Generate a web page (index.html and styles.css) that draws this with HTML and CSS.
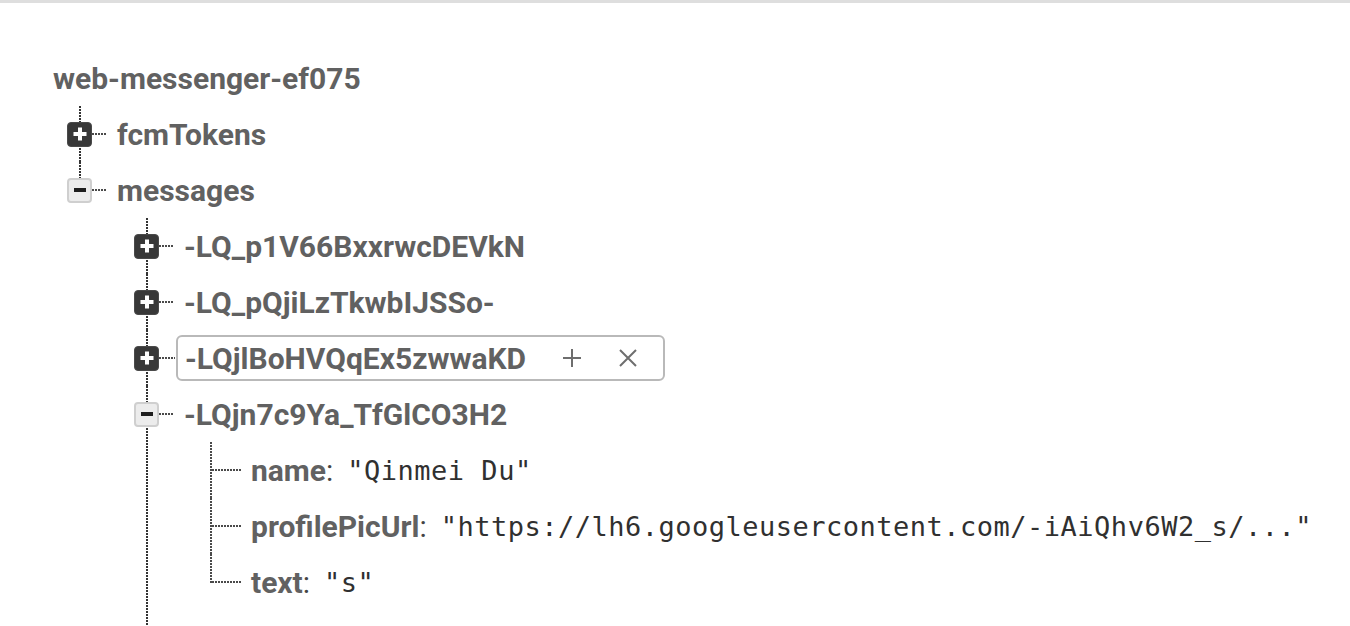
FILE: index.html
```html
<!DOCTYPE html>
<html lang="en">
<head>
<meta charset="utf-8">
<title>web-messenger-ef075</title>
<link rel="stylesheet" href="styles.css">
</head>
<body>
<div class="page">
  <div class="tree">
    <div class="root-label">web-messenger-ef075</div>
    <ul class="branch lvl1">
      <li class="node">
        <div class="row"><span class="toggle plus"></span><span class="conn"></span><span class="key">fcmTokens</span></div>
      </li>
      <li class="node">
        <div class="row"><span class="toggle minus"></span><span class="conn"></span><span class="key">messages</span></div>
        <ul class="branch lvl2 open-end">
          <li class="node">
            <div class="row"><span class="toggle plus"></span><span class="conn"></span><span class="key">-LQ_p1V66BxxrwcDEVkN</span></div>
          </li>
          <li class="node">
            <div class="row"><span class="toggle plus"></span><span class="conn"></span><span class="key">-LQ_pQjiLzTkwbIJSSo-</span></div>
          </li>
          <li class="node">
            <div class="row"><span class="toggle plus"></span><span class="conn conn-short"></span>
              <span class="key selected">-LQjlBoHVQqEx5zwwaKD
                <span class="actions">
                  <svg class="act" viewBox="0 0 20 20"><path d="M10 1v18M1 10h18"/></svg>
                  <svg class="act" viewBox="0 0 20 20"><path d="M2 2l16 16M18 2L2 18"/></svg>
                </span>
              </span>
            </div>
          </li>
          <li class="node">
            <div class="row"><span class="toggle minus"></span><span class="conn"></span><span class="key">-LQjn7c9Ya_TfGlCO3H2</span></div>
            <ul class="branch lvl3">
              <li class="node leaf">
                <div class="row"><span class="conn conn-leaf"></span><span class="key">name<span class="colon">:</span></span><span class="val">"Qinmei Du"</span></div>
              </li>
              <li class="node leaf">
                <div class="row"><span class="conn conn-leaf"></span><span class="key">profilePicUrl<span class="colon">:</span></span><span class="val">"https://lh6.googleusercontent.com/-iAiQhv6W2_s/..."</span></div>
              </li>
              <li class="node leaf">
                <div class="row"><span class="conn conn-leaf"></span><span class="key">text<span class="colon">:</span></span><span class="val">"s"</span></div>
              </li>
            </ul>
          </li>
        </ul>
      </li>
    </ul>
  </div>
</div>
</body>
</html>
```

FILE: styles.css
```css
html, body {
  margin: 0;
  padding: 0;
  background: #ffffff;
}

body {
  font-family: Roboto, "Liberation Sans", sans-serif;
  color: #616161;
  overflow: hidden;
}

.page {
  border-top: 3px solid #dedede;
  padding-top: 47px;
}

.root-label {
  height: 56px;
  display: flex;
  align-items: center;
  padding-left: 53px;
  font-size: 30px;
  font-weight: 700;
}

.branch {
  list-style: none;
  margin: 0;
  padding: 0;
}

.lvl1 {
  margin-left: 79px;
}

.lvl2 {
  margin-left: 67px;
}

.lvl3 {
  margin-left: 64px;
}

.node {
  position: relative;
}

.node::before {
  content: "";
  position: absolute;
  left: 0;
  top: 0;
  bottom: 0;
  width: 2px;
  background: repeating-linear-gradient(to bottom, #333 0 2px, transparent 2px 3px);
}

.lvl3 > .node::before {
  background: repeating-linear-gradient(to bottom, #4a4a4a 0 2px, transparent 2px 3px);
}

.branch:not(.open-end) > .node:last-child::before {
  bottom: auto;
  height: 29px;
}

.open-end > .node:last-child {
  padding-bottom: 40px;
}

.row {
  height: 56px;
  display: flex;
  align-items: center;
  margin-left: -12px;
  white-space: nowrap;
}

.leaf > .row {
  margin-left: 2px;
}

.toggle {
  position: relative;
  z-index: 1;
  width: 25px;
  height: 25px;
  box-sizing: border-box;
  border-radius: 4px;
  flex: none;
}

.toggle.plus {
  background: #383838;
  border: 1px solid #4a4a4a;
}

.toggle.plus::before,
.toggle.plus::after,
.toggle.minus::before {
  content: "";
  position: absolute;
  left: 50%;
  top: 50%;
  transform: translate(-50%, -50%);
}

.toggle.plus::before {
  width: 13px;
  height: 4px;
  background: #ffffff;
}

.toggle.plus::after {
  width: 4px;
  height: 13px;
  background: #ffffff;
}

.toggle.minus {
  background: #ececec;
  border: 2px solid #cfcfcf;
}

.toggle.minus::before {
  width: 12px;
  height: 4px;
  background: #1e1e1e;
}

.conn {
  flex: none;
  width: 14px;
  height: 2px;
  background: repeating-linear-gradient(to right, #4a4a4a 0 2px, transparent 2px 3px);
}

.conn-short {
  width: 16px;
}

.conn-leaf {
  width: 29px;
  margin-right: -1px;
}

.key {
  margin-left: 11px;
  font-size: 30px;
  font-weight: 700;
  color: #616161;
}

.key .colon {
  font-weight: 400;
  color: #444;
}

.key.selected {
  margin-left: 1px;
  height: 46px;
  box-sizing: border-box;
  display: flex;
  align-items: center;
  padding: 0 25px 0 7px;
  border: 2px solid #b9b9b9;
  border-radius: 6px;
}

.actions {
  display: flex;
  align-items: center;
  gap: 36px;
  margin-left: 36px;
}

.act {
  width: 20px;
  height: 20px;
  fill: none;
  stroke: #6e6e6e;
  stroke-width: 2;
}

.val {
  margin-left: 14px;
  font-family: "DejaVu Sans Mono", "Liberation Mono", monospace;
  font-size: 27px;
  color: #303030;
  letter-spacing: 0.5px;
}
```
